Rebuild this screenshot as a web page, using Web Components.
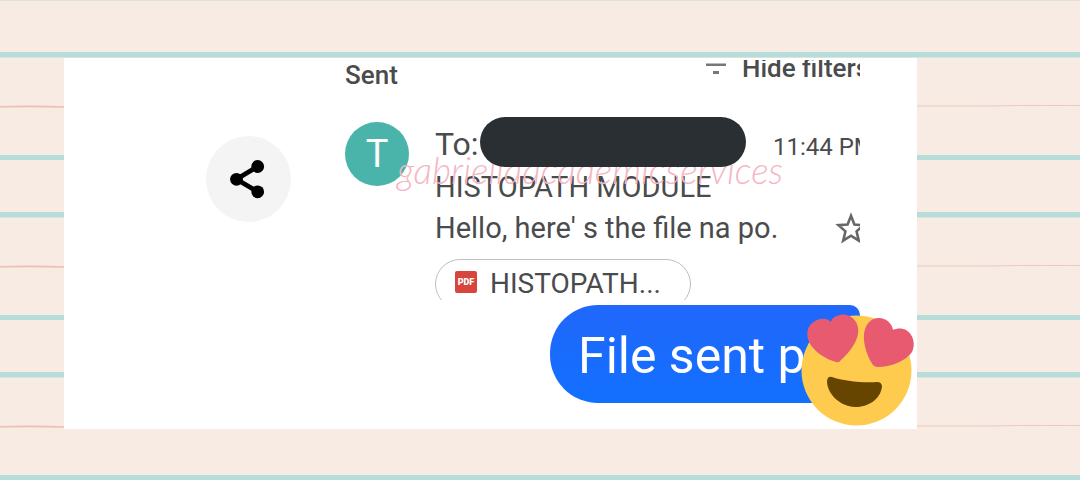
<!DOCTYPE html>
<html lang="en">
<head>
<meta charset="utf-8">
<meta name="viewport" content="width=device-width, initial-scale=1">
<title>File sent</title>
<style>
body { margin: 0; font-family: Roboto, "Liberation Sans", sans-serif; color: #4a4b4c; }
</style>
</head>
<body>
<ruled-paper>
  <photo-card>
    <share-button slot="side"></share-button>
    <mail-view>
      <mail-header slot="header" heading="Sent" action="Hide filters"></mail-header>
      <mail-item initial="T" time="11:44 PM" subject="HISTOPATH MODULE" file="HISTOPATH...">Hello, here' s the file na po.</mail-item>
      <water-mark slot="mark">gabriellaacademicservices</water-mark>
    </mail-view>
    <chat-bubble>File sent p</chat-bubble>
    <heart-eyes slot="sticker"></heart-eyes>
  </photo-card>
</ruled-paper>

<script>
const define = (name, markup) => {
  const template = document.createElement('template');
  template.innerHTML = markup;
  customElements.define(name, class extends HTMLElement {
    constructor() {
      super();
      this.attachShadow({ mode: 'open' }).append(template.content.cloneNode(true));
    }
    connectedCallback() {
      this.shadowRoot.querySelectorAll('[data-text]').forEach(el => {
        el.textContent = this.getAttribute(el.dataset.text);
      });
    }
  });
};

define('ruled-paper', `
<style>
:host { display: block; position: relative; box-sizing: border-box; min-height: 100vh; padding: 58px 163px 51px 64px;
  background: #f8ebe3 repeating-linear-gradient(#f8ebe3 0 52px, #b7dddb 52px 57px, #f8ebe3 57px 155px, #b7dddb 155px 160px); }
.rules { position: absolute; inset: 0; width: 100%; height: 100%; }
.first { position: absolute; inset: 0 0 auto 0; height: 1px; background: #dde2dc; }
.body { position: relative; }
</style>
<svg class="rules" aria-hidden="true">
  <defs><pattern id="r" width="1080" height="160" patternUnits="userSpaceOnUse">
    <path d="M0 106.8 Q34 105.8 64 107" fill="none" stroke="#e9bfb0" stroke-width="1.6"/>
    <path d="M917 106 L954 106 L990 106 L1026 105.4 L1080 105.6" fill="none" stroke="#ecc9bb" stroke-width="1"/>
    <rect y="57" width="1080" height="1" fill="#d8e4df"/>
  </pattern></defs>
  <rect width="100%" height="100%" fill="url(#r)"/>
</svg>
<div class="first"></div>
<div class="body"><slot></slot></div>`);

define('photo-card', `
<style>
:host { display: grid; grid-template-columns: 85px minmax(0, 1fr); column-gap: 54px; position: relative;
  background: #fff; padding: 2px 57px 26px 142px; }
.side { padding-top: 76px; }
.sticker { position: absolute; right: 1px; bottom: 1px; }
</style>
<div class="side"><slot name="side"></slot></div>
<main><slot></slot></main>
<div class="sticker"><slot name="sticker"></slot></div>`);

define('share-button', `
<style>
:host { display: block; }
button { display: block; width: 85px; height: 86px; padding: 0; border: 0; border-radius: 50%; background: #f4f4f4; }
svg { display: block; width: 85px; height: 86px; }
</style>
<button type="button" aria-label="Share"><svg viewBox="0 0 85 86">
<path d="M51.7 30.5 30.5 43.3 51.7 55.8" fill="none" stroke="#000" stroke-width="4.8"/>
<circle cx="51.7" cy="30.5" r="6.4"/><circle cx="30.5" cy="43.3" r="6.4"/><circle cx="51.7" cy="55.8" r="6.4"/>
</svg></button>`);

define('mail-view', `
<style>
:host { display: block; position: relative; }
.mark { position: absolute; left: 52px; top: 88px; z-index: 1; }
</style>
<slot name="header"></slot>
<slot></slot>
<div class="mark"><slot name="mark"></slot></div>`);

define('mail-header', `
<style>
:host { display: flex; justify-content: space-between; align-items: flex-start; height: 57px; overflow: hidden; font-size: 26px; font-weight: 500; }
h1 { margin: 0; font: inherit; line-height: 30px; }
button { display: flex; gap: 16px; width: 154px; overflow: visible; padding: 0; border: 0; background: none; font: inherit; line-height: 16px; color: inherit; white-space: nowrap; }
svg { flex: none; width: 20px; height: 16px; }
</style>
<h1 data-text="heading"></h1>
<button type="button"><svg viewBox="0 0 20 16" fill="#777"><path d="M0 3.5h20v2.5H0zM7 11h6v3H7z"/></svg><span data-text="action"></span></button>`);

define('mail-item', `
<style>
:host { display: grid; grid-template-columns: 64px minmax(0, 1fr); column-gap: 26px; font-size: 29px; line-height: 41px; white-space: nowrap; }
.avatar { margin-top: 5px; width: 64px; height: 64px; border-radius: 50%; background: #4bb4aa; color: #fff; font-size: 38px; line-height: 64px; text-align: center; }
.top { display: flex; height: 50px; line-height: 54px; }
.to { width: 45px; font-size: 32px; }
.pill { flex: 1; position: relative; z-index: 2; border-radius: 25px; background: #2a2f33; }
time { width: 87px; margin-left: 27px; overflow: hidden; font-size: 24px; line-height: 60px; }
.snippet { display: flex; justify-content: space-between; }
.star { width: 26px; height: 41px; padding: 0; border: 0; background: none; overflow: hidden; }
.star svg { display: block; width: 34px; height: 34px; }
.files { height: 41px; margin-top: 10px; overflow: hidden; }
.chip { display: flex; align-items: center; box-sizing: border-box; width: 256px; height: 50px; padding: 0 0 0 19px; gap: 13px;
  border: 1px solid #bdbdbd; border-radius: 25px; background: #fff; font: inherit; font-size: 28px; line-height: 48px; color: inherit; }
.pdf { width: 22px; height: 22px; margin-bottom: 4px; border-radius: 2px; background: #d8453c; color: #fff; font-size: 9px; font-weight: 900; line-height: 22px; text-align: center; }
</style>
<div class="avatar" data-text="initial"></div>
<div>
  <div class="top"><span class="to">To:</span><span class="pill"></span><time data-text="time"></time></div>
  <div data-text="subject"></div>
  <div class="snippet"><slot></slot><button class="star" type="button" aria-label="Star"><svg viewBox="0 0 32 32"><path d="M16 3.5 19.2 11.8 27.8 12.4 21.2 18.2 23.4 27 16 22.3 8.6 27 10.8 18.2 4.2 12.4 12.8 11.8Z" fill="none" stroke="#666" stroke-width="2.4"/></svg></button></div>
  <div class="files"><button class="chip" type="button"><span class="pdf">PDF</span><span data-text="file"></span></button></div>
</div>`);

define('water-mark', `
<style>
:host { display: block; font: italic 300 37px/44px Lato, "Liberation Sans", sans-serif; color: #f5b6c2; white-space: nowrap; pointer-events: none; }
</style>
<slot></slot>`);

define('chat-bubble', `
<style>
:host { display: block; margin: 5px 0 0 205px; box-sizing: border-box; height: 98px; padding: 2px 0 0 28px; overflow: hidden;
  border-radius: 48px 10px 10px 48px; background: linear-gradient(#2167fb, #1270ff); color: #fff; font-size: 50px; line-height: 98px; white-space: nowrap; }
</style>
<slot></slot>`);

define('heart-eyes', `
<style>
:host { display: block; }
svg { display: block; width: 116px; height: 118px; }
</style>
<svg viewBox="0 0 116 118" role="img" aria-label="Heart eyes">
<circle cx="56.5" cy="60.5" r="55" fill="#ffcb4e"/>
<g fill="#e75a70">
<path d="M31 12C27 8 21 8 15 11 8 15 6 22 8 29 11 40 25 49 36 52Q39 53 41 50C50 42 60 29 58 18 57 9 48 3 40 5 35 6 32 8 31 12Z"/>
<path d="M93 20C92 13 86 8 79 8 70 8 65 15 64 24 63 35 68 48 73 55Q75 57 78 57C90 57 106 51 112 42 116 34 113 24 106 20 102 18 97 18 93 20Z"/>
</g>
<path d="M32 67C43 71 62 73 77 72Q82 72 82 77C80 90 68 97 55 97 40 96 28 85 27 72Q27 66 32 67Z" fill="#664500"/>
</svg>`);
</script>
</body>
</html>
